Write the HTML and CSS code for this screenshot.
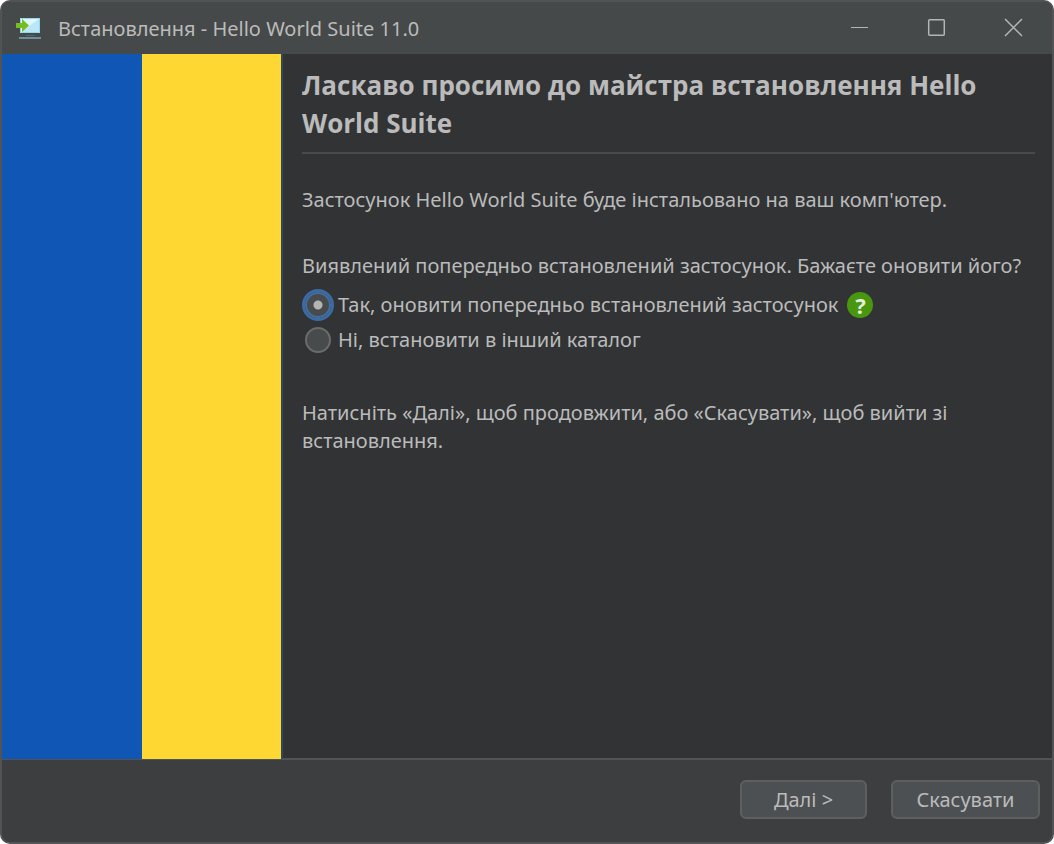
FILE: index.html
```html
<!DOCTYPE html>
<html lang="uk">
<head>
<meta charset="utf-8">
<title>Встановлення - Hello World Suite 11.0</title>
<link rel="stylesheet" href="styles.css">
</head>
<body>
<div class="window">
  <header class="titlebar">
    <svg class="app-icon" viewBox="0 0 28 26" aria-hidden="true">
      <path fill="#b9e7f7" d="M4 3h20v15H4z"/>
      <path fill="#e0f7fd" d="M4 3h20L4 18z"/>
      <path fill="none" stroke="#8fd8ee" d="M4.500 3.500h19v14h-19z"/>
      <path fill="#51686f" d="M10 20h9v1h-9z"/>
      <path fill="#6e8e9c" d="M3 22h22v2H3z"/>
      <path fill="#76bd22" d="M0 8h6V4l7 6.500L6 17v-4H0z"/>
    </svg>
    <h1 class="caption">Встановлення - Hello World Suite 11.0</h1>
    <div class="window-controls">
      <button type="button" class="window-button" aria-label="Згорнути">
        <svg viewBox="0 0 20 20" aria-hidden="true"><path d="M1 9.500h17" stroke-width="1"/></svg>
      </button>
      <button type="button" class="window-button" aria-label="Розгорнути">
        <svg viewBox="0 0 20 20" aria-hidden="true"><rect x="1.700" y="1.700" width="15.600" height="15.600" rx="1"/></svg>
      </button>
      <button type="button" class="window-button" aria-label="Закрити">
        <svg viewBox="0 0 20 20" aria-hidden="true"><path d="M1 1l17 17M18 1L1 18"/></svg>
      </button>
    </div>
  </header>
  <form class="wizard">
    <div class="body">
      <div class="banner" aria-hidden="true">
        <div class="stripe stripe-blue"></div>
        <div class="stripe stripe-yellow"></div>
      </div>
      <main class="content">
        <h2 class="heading">Ласкаво просимо до майстра встановлення Hello World Suite</h2>
        <p class="intro">Застосунок Hello World Suite буде інстальовано на ваш комп'ютер.</p>
        <fieldset class="choices">
          <legend class="question">Виявлений попередньо встановлений застосунок. Бажаєте оновити його?</legend>
          <div class="choice">
            <input class="radio" type="radio" name="mode" id="update" checked>
            <label for="update">Так, оновити попередньо встановлений застосунок</label>
            <button type="button" class="help" aria-label="Довідка">?</button>
          </div>
          <div class="choice">
            <input class="radio" type="radio" name="mode" id="fresh">
            <label for="fresh">Ні, встановити в інший каталог</label>
          </div>
        </fieldset>
        <p class="hint">Натисніть «Далі», щоб продовжити, або «Скасувати», щоб вийти зі встановлення.</p>
      </main>
    </div>
    <footer class="actions">
      <button type="button" class="button button-next">Далі &gt;</button>
      <button type="button" class="button button-cancel">Скасувати</button>
    </footer>
  </form>
</div>
</body>
</html>
```

FILE: styles.css
```css
* {
  box-sizing: border-box;
}

body {
  margin: 0;
  background: #fff;
  color: #bbb;
  font: 20px/28px "Noto Sans", "Open Sans", sans-serif;
}

h1, h2, p, fieldset, legend {
  margin: 0;
  padding: 0;
}

button {
  color: inherit;
  font: inherit;
}

.window {
  display: flex;
  flex-direction: column;
  min-height: 100vh;
  overflow: hidden;
  border: 2px solid #515354;
  border-radius: 10px;
  background: #3c3e40;
}

.titlebar {
  display: flex;
  align-items: center;
  height: 52px;
  padding-left: 14px;
  background: #464949;
}

.app-icon {
  width: 28px;
  height: 26px;
  margin-right: 14px;
}

.caption {
  flex: 1;
  padding-top: 2px;
  font-size: 20px;
  font-weight: 400;
}

.window-controls {
  display: flex;
}

.window-button {
  display: grid;
  place-items: center;
  width: 77px;
  height: 52px;
  padding: 0;
  border: 0;
  background: none;
}

.window-button svg {
  width: 20px;
  height: 20px;
  fill: none;
  stroke: #b4b6b6;
  stroke-width: 1.5;
}

.wizard {
  display: flex;
  flex: 1;
  flex-direction: column;
}

.body {
  display: flex;
  flex: 1;
  background: #313335;
}

.banner {
  display: flex;
  flex: none;
  width: 281px;
  border-right: 2px solid #2c4a62;
}

.stripe {
  flex: 1;
}

.stripe-blue {
  background: #1056b5;
}

.stripe-yellow {
  background: #ffd733;
}

.content {
  flex: 1;
  padding: 12px 17px 0 19px;
  border-bottom: 1px solid #515354;
}

.heading {
  padding-bottom: 10px;
  border-bottom: 2px solid #484a4c;
  font-family: "Open Sans", "Noto Sans", sans-serif;
  font-size: 26px;
  font-weight: 700;
  line-height: 38px;
}

.intro {
  margin-top: 32px;
}

.choices {
  margin-top: 38px;
  border: 0;
}

.question {
  margin-bottom: 7px;
}

.choice {
  display: flex;
  align-items: center;
  height: 35px;
}

.radio {
  appearance: none;
  width: 26px;
  height: 26px;
  margin: 0 7px 0 3px;
  border: 2px solid #6b6b6b;
  border-radius: 50%;
  background: #484b4c;
}

.radio:checked {
  border-color: #416ea4;
  background: radial-gradient(circle, #b4b4b4 0 4px, #484b4c 5px);
  box-shadow: 0 0 0 3px #3d6aa3;
}

.help {
  width: 26px;
  height: 26px;
  margin-left: 9px;
  padding: 0;
  border: 0;
  border-radius: 50%;
  background: #49960f;
  color: #e4ecdc;
  font-size: 22px;
  font-weight: 700;
  line-height: 24px;
}

.hint {
  margin-top: 42px;
}

.actions {
  display: flex;
  justify-content: flex-end;
  gap: 24px;
  padding: 20px 12px 23px;
  border-top: 1px solid #515354;
}

.button {
  height: 39px;
  padding: 1px 0 0;
  border: 2px solid #5e6060;
  border-radius: 6px;
  background: #4c5052;
}

.button-next {
  width: 127px;
}

.button-cancel {
  width: 149px;
}
```
